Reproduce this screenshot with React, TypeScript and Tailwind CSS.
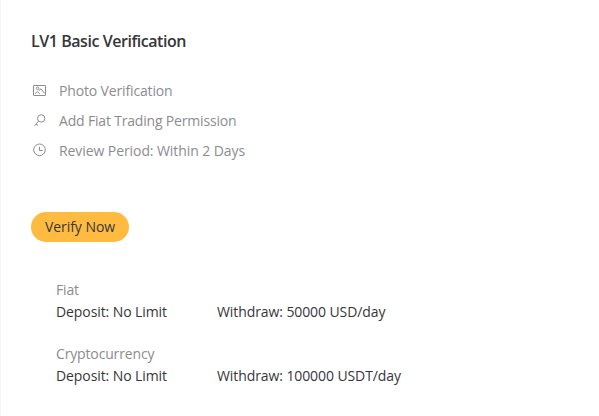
import type { ReactNode } from 'react'

const ICON_PROPS = {
  width: 14,
  height: 14,
  viewBox: '0 0 14 14',
  fill: 'none',
  stroke: 'currentColor',
  strokeWidth: 1,
}

function PhotoIcon() {
  return (
    <svg {...ICON_PROPS}>
      <rect x="0.5" y="2.5" width="12" height="10" rx="0.4" />
      <circle cx="4.6" cy="5.3" r="1.3" />
      <path d="M2 10.8 4.4 8.6l2.4 2.2M5.8 7.8 8 5.8l3.6 4.6" />
    </svg>
  )
}

function KeyIcon() {
  return (
    <svg {...ICON_PROPS}>
      <circle cx="8.2" cy="5.4" r="3.7" />
      <path d="M5.6 8.1 1.5 12.7M3 11.1l2 1.4" />
    </svg>
  )
}

function ClockIcon() {
  return (
    <svg {...ICON_PROPS}>
      <circle cx="6.5" cy="6.8" r="5.8" />
      <path d="M6.5 3.8v3.7h3.2" />
    </svg>
  )
}

const FEATURES: { icon: ReactNode; label: string; tracking: string }[] = [
  { icon: <PhotoIcon />, label: 'Photo Verification', tracking: 'tracking-[-0.15px]' },
  { icon: <KeyIcon />, label: 'Add Fiat Trading Permission', tracking: 'tracking-[-0.18px]' },
  { icon: <ClockIcon />, label: 'Review Period: Within 2 Days', tracking: 'tracking-[-0.08px]' },
]

const LIMITS = [
  { title: 'Fiat', deposit: 'No Limit', withdraw: '50000 USD/day' },
  { title: 'Cryptocurrency', deposit: 'No Limit', withdraw: '100000 USDT/day' },
]

export default function App() {
  return (
    <div className="h-screen overflow-hidden border-l border-[#f5f5f5] bg-white pl-[30px] pt-[29px] font-['Open_Sans',sans-serif] text-[14px] text-[#36363a]">
      <h2 className="text-base leading-6 font-semibold tracking-[-0.45px]">LV1 Basic Verification</h2>
      <ul className="mt-[22px] text-[#8c8c8f]">
        {FEATURES.map(({ icon, label, tracking }) => (
          <li key={label} className="flex h-[30px] items-center">
            <span className="ml-0.5 w-[26px]">{icon}</span>
            <span className={tracking}>{label}</span>
          </li>
        ))}
      </ul>
      <button
        type="button"
        className="mt-[47px] block h-[30px] w-[98px] rounded-full bg-[#ffbb3f] pb-0.5 tracking-[-0.05px]"
      >
        Verify Now
      </button>
      <div className="mt-[37px] ml-[25px] flex flex-col gap-5 leading-[22px]">
        {LIMITS.map(({ title, deposit, withdraw }) => (
          <div key={title}>
            <div className="tracking-[-0.15px] text-[#8c8c8f]">{title}</div>
            <div className="flex tracking-[-0.09px]">
              <span className="w-[161px]">Deposit: {deposit}</span>
              <span>Withdraw: {withdraw}</span>
            </div>
          </div>
        ))}
      </div>
    </div>
  )
}
